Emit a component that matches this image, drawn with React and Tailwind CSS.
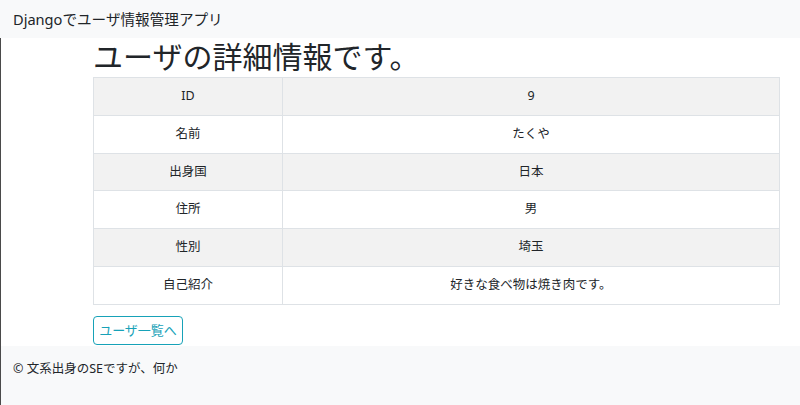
import React from "react";

const rows = [
  ["ID", "9"],
  ["名前", "たくや"],
  ["出身国", "日本"],
  ["住所", "男"],
  ["性別", "埼玉"],
  ["自己紹介", "好きな食べ物は焼き肉です。"],
];

export default function App() {
  return (
    <div
      className="w-[800px] h-[405px] bg-white text-[#212529] overflow-hidden flex flex-col"
      style={{ fontFamily: '"Noto Sans", "Noto Sans CJK JP", sans-serif' }}
    >
      <nav className="h-[38px] shrink-0 bg-[#f8f9fa] flex items-center px-[13px]">
        <span className="text-[14.6px] leading-none">Djangoでユーザ情報管理アプリ</span>
      </nav>
      <div className="flex-1 flex flex-col border-l border-[#4a4a4a]">
        <main className="h-[308px] shrink-0 bg-white pl-[92px] pr-[20px]">
          <h1 className="text-[30px] leading-[36px] mt-[1px] font-normal">ユーザの詳細情報です。</h1>
          <table className="w-[687px] mt-[2px] border-collapse border border-[#dee2e6] text-[12.5px]">
            <tbody>
              {rows.map(([k, v], i) => (
                <tr key={k} className={i % 2 === 0 ? "bg-[#f2f2f2]" : "bg-white"}>
                  <td className="w-[189px] h-[37.8px] border border-[#dee2e6] text-center align-middle p-0">{k}</td>
                  <td className="h-[37.8px] border border-[#dee2e6] text-center align-middle p-0">{v}</td>
                </tr>
              ))}
            </tbody>
          </table>
          <button className="mt-[11px] w-[90px] h-[29px] border border-[#17a2b8] text-[#17a2b8] rounded-[4px] text-[13px] leading-none flex items-center justify-center">
            ユーザ一覧へ
          </button>
        </main>
        <footer className="flex-1 bg-[#f8f9fa] px-[12px] pt-[14px] text-[12.5px]">
          © 文系出身のSEですが、何か
        </footer>
      </div>
    </div>
  );
}
